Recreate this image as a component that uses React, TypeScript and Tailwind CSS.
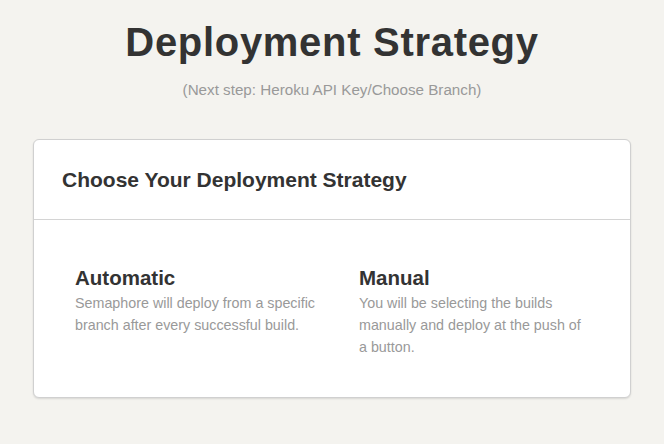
export default function App() {
  return (
    <div
      className="min-h-[444px] w-full bg-[#f4f3ef] pb-10"
      style={{ fontFamily: '"Liberation Sans", Arial, Helvetica, sans-serif' }}
    >
      <div className="pt-[18px] text-center">
        <h1 className="text-[40px] leading-[48px] font-bold text-[#333] tracking-[0.7px]">
          Deployment Strategy
        </h1>
        <p className="mt-[15px] text-[15.2px] leading-[18px] text-[#999]">
          (Next step: Heroku API Key/Choose Branch)
        </p>
      </div>

      <div className="mx-[33px] mt-[40px] rounded-[6px] border border-[#d0d0d0] bg-white shadow-[0_1px_2px_rgba(0,0,0,0.12)]">
        <div className="flex h-[80px] items-center border-b border-[#d4d4d4] px-[28px]">
          <h2 className="text-[21px] font-bold text-[#333]">Choose Your Deployment Strategy</h2>
        </div>
        <div className="grid grid-cols-[284px_1fr] pl-[41px] pt-[46px] pb-[39px]">
          <Option
            title="Automatic"
            text="Semaphore will deploy from a specific branch after every successful build."
            width="w-[256px]"
          />
          <Option
            title="Manual"
            text="You will be selecting the builds manually and deploy at the push of a button."
            width="w-[226px]"
          />
        </div>
      </div>
    </div>
  );
}

function Option({ title, text, width }: { title: string; text: string; width: string }) {
  return (
    <div>
      <h3 className="text-[20.5px] leading-[24px] font-bold text-[#333]">{title}</h3>
      <p className={`${width} mt-[2px] text-[14.3px] leading-[22px] text-[#999]`}>{text}</p>
    </div>
  );
}
